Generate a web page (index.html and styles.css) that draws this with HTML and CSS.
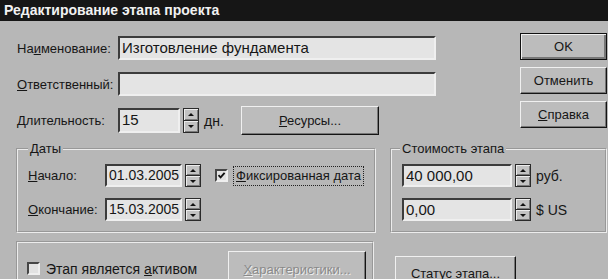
FILE: index.html
```html
<!DOCTYPE html>
<html lang="ru">
<head>
<meta charset="utf-8">
<link rel="stylesheet" href="styles.css">
</head>
<body>
<div class="dialog">
  <div class="titlebar">Редактирование этапа проекта</div>
  <div class="content">
    <div class="top">
      <div class="form">
        <div class="row">
          <label class="lbl">На<u>и</u>менование:</label>
          <div class="field wide">Изготовление фундамента</div>
        </div>
        <div class="row r2">
          <label class="lbl"><u>О</u>тветственный:</label>
          <div class="field wide"></div>
        </div>
        <div class="row r3">
          <label class="lbl">Длительность:</label>
          <div class="field dur">15</div>
          <div class="spin tall"><span class="up"></span><span class="down"></span></div>
          <span class="unit">дн.</span>
          <button class="btn res"><u>Р</u>есурсы...</button>
        </div>
      </div>
      <div class="actions">
        <button class="btn default">OK</button>
        <button class="btn">Отменить</button>
        <button class="btn"><u>С</u>правка</button>
      </div>
    </div>

    <div class="mid">
      <fieldset class="group dates">
        <legend>Даты</legend>
        <div class="grow">
          <label class="glbl"><u>Н</u>ачало:</label>
          <div class="field date">01.03.2005</div>
          <div class="spin"><span class="up"></span><span class="down"></span></div>
          <span class="check on"><svg viewBox="0 0 9 9" width="9" height="9"><path d="M1.5 4.2 L3.6 6.4 L7.6 1.8" fill="none" stroke="#111" stroke-width="1.8"/></svg></span>
          <span class="focus"><u>Ф</u>иксированная дата</span>
        </div>
        <div class="grow g2">
          <label class="glbl"><u>О</u>кончание:</label>
          <div class="field date">15.03.2005</div>
          <div class="spin"><span class="up"></span><span class="down"></span></div>
        </div>
      </fieldset>
      <fieldset class="group cost">
        <legend>Стоимость этапа</legend>
        <div class="grow">
          <div class="field money">40 000,00</div>
          <div class="spin"><span class="up"></span><span class="down"></span></div>
          <span class="unit2">руб.</span>
        </div>
        <div class="grow g2">
          <div class="field money">0,00</div>
          <div class="spin"><span class="up"></span><span class="down"></span></div>
          <span class="unit2">$ US</span>
        </div>
      </fieldset>
    </div>

    <div class="bottom">
      <div class="box">
        <span class="check asset"></span>
        <span class="asset-lbl">Этап является <u>а</u>ктивом</span>
        <button class="btn chars" disabled><u>Х</u>арактеристики...</button>
      </div>
      <button class="btn status">С<u>т</u>атус этапа...</button>
    </div>
  </div>
</div>
</body>
</html>
```

FILE: styles.css
```css
* { box-sizing: border-box; }
html, body {
  margin: 0;
  padding: 0;
  width: 608px;
  height: 279px;
  overflow: hidden;
  background: #b7b7b7;
}
.dialog {
  font-family: "Liberation Sans", Arial, sans-serif;
  font-size: 13px;
  color: #161616;
}
.titlebar {
  height: 21px;
  line-height: 21px;
  background: #161616;
  color: #f2f2f2;
  font-weight: bold;
  font-size: 14px;
  padding-left: 4px;
  white-space: nowrap;
}
.content {
  padding: 0 1px 0 16px;
}
.top {
  display: flex;
  align-items: flex-start;
  padding-top: 12px;
}
.form {
  width: 420px;
  padding-top: 3px;
  display: flex;
  flex-direction: column;
}
.row {
  display: flex;
  align-items: center;
  height: 24px;
}
.r2 { margin-top: 12px; }
.r3 { margin-top: 10px; height: 29px; }
.lbl {
  width: 102px;
  padding-left: 1px;
  white-space: nowrap;
}
.field {
  height: 24px;
  background: #e4e4e4;
  border: 2px solid;
  border-color: #3c3c3c #efefef #efefef #3c3c3c;
  padding-left: 2px;
  line-height: 20px;
  white-space: nowrap;
  font-size: 14px;
}
.wide { width: 318px; font-size: 15px; }
.dur { width: 62px; height: 25px; font-size: 15px; }
.spin {
  width: 16px;
  height: 23px;
  margin-left: 3px;
  border: 1px solid #2a2a2a;
  display: flex;
  flex-direction: column;
}
.spin.tall { height: 25px; }
.spin span {
  flex: 1;
  background: #c2c2c2;
  box-shadow: inset 1px 1px #ececec, inset -1px -1px #7a7a7a;
  display: flex;
  align-items: center;
  justify-content: center;
}
.spin .up { border-bottom: 1px solid #2a2a2a; }
.spin .up::before {
  content: "";
  border-left: 3px solid transparent;
  border-right: 3px solid transparent;
  border-bottom: 3px solid #111;
}
.spin .down::before {
  content: "";
  border-left: 3px solid transparent;
  border-right: 3px solid transparent;
  border-top: 3px solid #111;
}
.unit {
  width: 42px;
  padding-left: 5px;
  font-size: 14px;
}
.btn {
  font-family: "Liberation Sans", Arial, sans-serif;
  font-size: 13px;
  color: #161616;
  background: #bcbcbc;
  border: 1px solid;
  border-color: #f0f0f0 #141414 #141414 #f0f0f0;
  box-shadow: inset -1px -1px #777;
  padding: 0;
  white-space: nowrap;
}
.res { width: 138px; height: 29px; }
.actions {
  margin-left: auto;
  width: 87px;
  display: flex;
  flex-direction: column;
  gap: 7px;
}
.actions .btn { height: 27px; }
.btn.default {
  border: 1px solid #111;
  box-shadow: inset 1px 1px #f0f0f0, inset -2px -2px #777;
}
.mid {
  display: flex;
  align-items: flex-start;
  gap: 14px;
  margin-top: 7px;
}
.group {
  margin: 0;
  border: 2px groove #ececec;
  padding: 8px 0 10px 10px;
  min-width: 0;
}
.group legend {
  padding: 0 2px;
  line-height: 14px;
  height: 14px;
}
.dates { width: 360px; padding-left: 10px; }
.dates legend { margin-left: 0; }
.cost { width: 217px; padding-left: 10px; }
.cost legend { margin-left: -2px; }
.grow {
  display: flex;
  align-items: center;
  height: 23px;
}
.g2 { margin-top: 11px; }
.glbl {
  width: 77px;
  white-space: nowrap;
}
.date { width: 77px; height: 23px; line-height: 19px; }
.money { width: 110px; height: 23px; line-height: 19px; font-size: 15px; }
.unit2 { padding-left: 5px; font-size: 14px; }
.check {
  width: 13px;
  height: 13px;
  border: 2px solid;
  border-color: #464646 #efefef #efefef #464646;
  background: #e2e2e2;
  display: inline-flex;
  align-items: center;
  justify-content: center;
  flex: none;
}
.check.on { margin-left: 14px; }
.focus {
  margin-left: 5px;
  border: 1px dotted #222;
  padding: 1px 2px 2px 2px;
  white-space: nowrap;
}
.bottom {
  display: flex;
  align-items: flex-start;
  margin-top: 8px;
}
.box {
  width: 358px;
  height: 60px;
  border: 2px groove #ececec;
  display: flex;
  align-items: flex-start;
  padding: 8px 6px 0 9px;
}
.asset { margin-top: 11px; }
.asset-lbl {
  margin-left: 6px;
  margin-top: 10px;
  font-size: 14px;
  white-space: nowrap;
}
.chars {
  margin-left: auto;
  width: 138px;
  height: 36px;
  color: #8a8a8a;
  text-shadow: 1px 1px #eee;
}
.status {
  margin-left: 21px;
  margin-top: 15px;
  width: 121px;
  height: 34px;
}
```
